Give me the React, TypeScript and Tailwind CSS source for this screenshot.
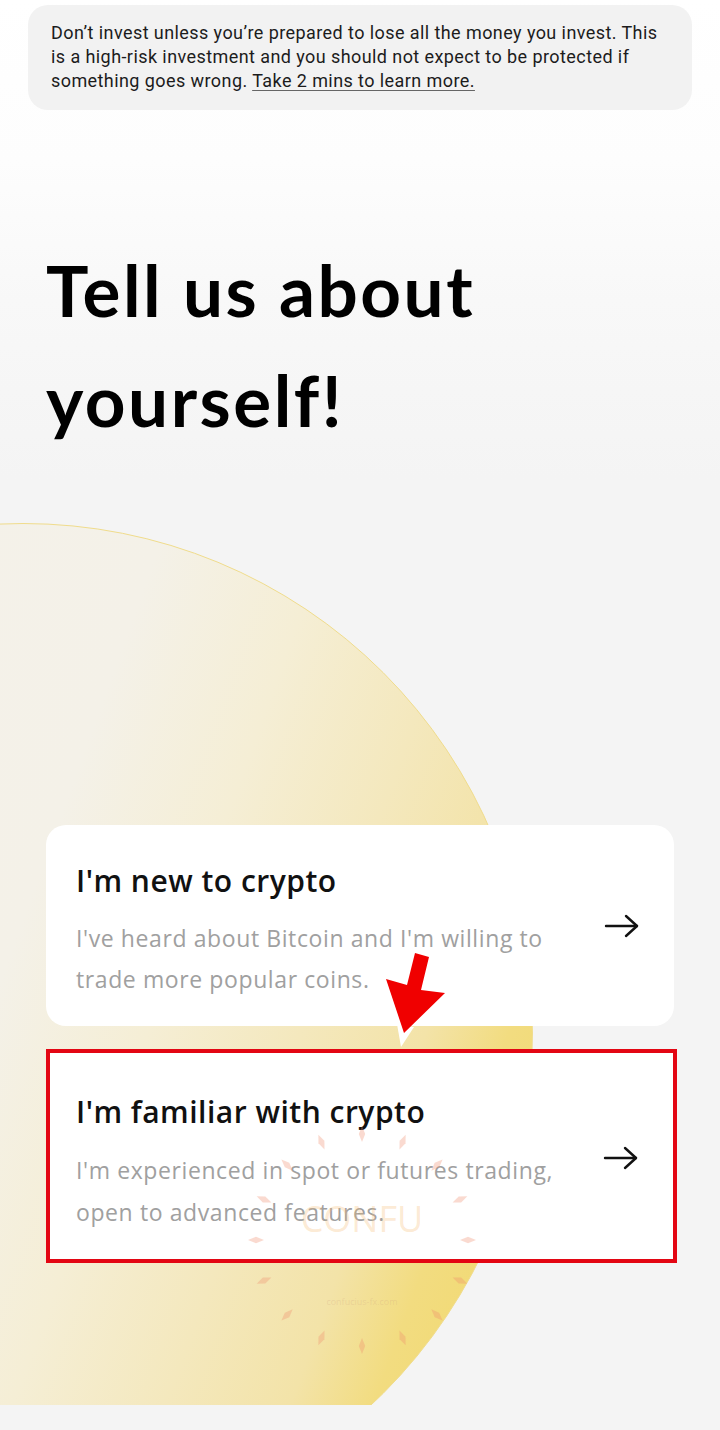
import React from "react";

function Arrow() {
  return (
    <svg width="36" height="24" viewBox="0 0 36 24" fill="none" stroke="#111" strokeWidth="2.4" strokeLinecap="round" strokeLinejoin="round">
      <path d="M2 12 H33" />
      <path d="M22 2 L33 12 L22 22" />
    </svg>
  );
}

function Watermark() {
  const cx = 362;
  const cy = 1240;
  const r = 106;
  const items = Array.from({ length: 16 }, (_, i) => i);
  return (
    <svg className="pointer-events-none absolute left-0 top-0" width="720" height="1430" viewBox="0 0 720 1430">
      {items.map((i) => {
        const a = (i * 22.5 * Math.PI) / 180;
        const x = cx + r * Math.cos(a);
        const y = cy + r * Math.sin(a);
        const deg = i * 22.5;
        return (
          <polygon
            key={i}
            points="-8,0 0,-3.2 8,0 0,3.2"
            transform={`translate(${x} ${y}) rotate(${deg})`}
            fill="rgba(238,140,110,0.32)"
          />
        );
      })}
      <text x="362" y="1232" textAnchor="middle" fontFamily="'Open Sans', sans-serif" fontSize="36" fill="rgba(245,185,110,0.3)">CONFU</text>
      <text x="362" y="1305" textAnchor="middle" fontFamily="'Open Sans', sans-serif" fontSize="9" fill="rgba(200,150,120,0.22)">confucius-fx.com</text>
    </svg>
  );
}

function RedArrow() {
  return (
    <svg className="pointer-events-none absolute left-0 top-0" width="720" height="1430" viewBox="0 0 720 1430">
      <polygon points="397,1024 414,1027 401,1047" fill="#ffffff" />
      <polygon
        points="415,953 429,957 421,990 445,993 404,1033 386,979 407,985"
        fill="#f00000"
      />
    </svg>
  );
}

export default function App() {
  return (
    <div
      className="relative w-[720px] min-h-[1430px] overflow-hidden bg-[linear-gradient(180deg,#ffffff_0px,#fdfdfd_160px,#f8f8f8_300px,#f4f4f4_480px)]"
      style={{ fontFamily: "'Open Sans', 'Noto Sans', sans-serif" }}
    >
      <div className="px-[28px] pt-[5px]">
        <div
          className="whitespace-nowrap rounded-[20px] bg-[#f2f2f2] px-[23px] pt-[16px] pb-[17px] text-[18px] leading-[24px] tracking-[0.42px] text-[#1c1c1c]"
          style={{ fontFamily: "Roboto, 'Noto Sans', sans-serif" }}
        >
          Don’t invest unless you’re prepared to lose all the money you invest. This
          <br />
          is a high-risk investment and you should not expect to be protected if
          <br />
          something goes wrong.{" "}
          <span className="underline decoration-[#666] underline-offset-[3px]">Take 2 mins to learn more.</span>
        </div>
      </div>

      <h1
        className="mt-[125px] px-[46px] text-[71px] font-bold leading-[110px] tracking-[2.5px] text-black"
        style={{ fontFamily: "Lato, 'Noto Sans', sans-serif" }}
      >
        Tell us about
        <br />
        yourself!
      </h1>

      <section className="relative h-[950px] overflow-hidden">
        <div className="absolute left-[-487px] top-[68px] h-[1020px] w-[1020px] rounded-full border-[1.5px] border-[#f0dc8c] bg-[linear-gradient(110deg,#f4f2ec_0%,#f4f1e8_47%,#f5eed5_59%,#f4e8bd_70%,#f3e3a8_79%,#f2dc80_85%,#f1d660_100%)]" />

        <div className="relative flex flex-col gap-[23px] pl-[46px] pt-[370px]">
          <div className="flex h-[201px] w-[628px] items-center justify-between rounded-[20px] bg-white pl-[30px] pr-[34px]">
            <div className="flex flex-col whitespace-nowrap pt-[9px]">
              <div className="text-[30px] font-semibold leading-[40px] tracking-[0.5px] text-[#111]">I'm new to crypto</div>
              <div className="mt-[17px] text-[23px] leading-[41px] tracking-[0.6px] text-[#a0a0a0]">
                I've heard about Bitcoin and I'm willing to
                <br />
                trade more popular coins.
              </div>
            </div>
            <div>
              <Arrow />
            </div>
          </div>

          <div className="flex h-[214px] w-[631px] items-center justify-between border-[4px] border-[#e30613] bg-white pl-[26px] pr-[34px]">
            <div className="flex flex-col whitespace-nowrap pt-[13px]">
              <div className="text-[30px] font-semibold leading-[40px] tracking-[0.5px] text-[#111]">I'm familiar with crypto</div>
              <div className="mt-[17px] text-[23px] leading-[42px] tracking-[0.6px] text-[#a0a0a0]">
                I'm experienced in spot or futures trading,
                <br />
                open to advanced features.
              </div>
            </div>
            <div className="mt-[4px]">
              <Arrow />
            </div>
          </div>
        </div>
      </section>

      <Watermark />
      <RedArrow />
    </div>
  );
}
